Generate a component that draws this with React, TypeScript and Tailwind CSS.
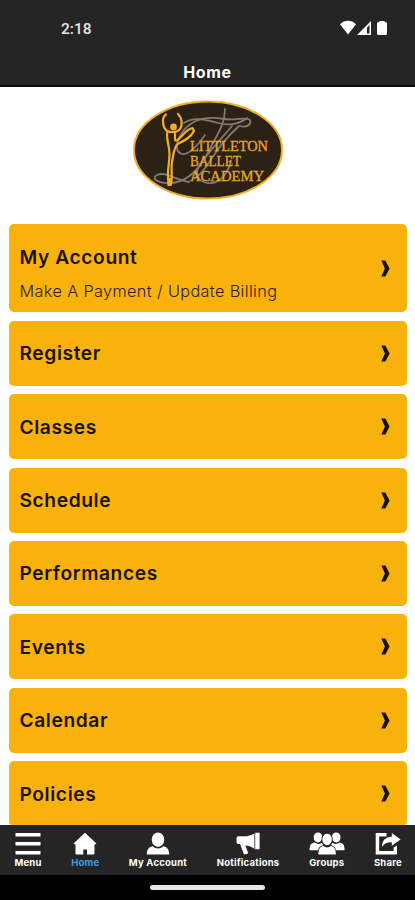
import React from 'react';

const menuItems = [
    { title: 'My Account', subtitle: 'Make A Payment / Update Billing' },
    { title: 'Register' },
    { title: 'Classes' },
    { title: 'Schedule' },
    { title: 'Performances' },
    { title: 'Events' },
    { title: 'Calendar' },
    { title: 'Policies' },
];

const Chevron = () => (
    <svg className="h-[17px] w-[9px] shrink-0" viewBox="0 0 9 17" fill="#171006">
        <path d="M0.3 0.5H4.3L8.6 8.5L4.3 16.5H0.3L3.9 8.5Z" />
    </svg>
);

const MenuCard: React.FC<{ title: string; subtitle?: string }> = ({ title, subtitle }) => (
    <div className={`flex shrink-0 items-center justify-between rounded-[5px] bg-[#f9b20b] pl-[10.5px] pr-[17px] text-[#1a1204] ${subtitle ? 'h-[88.4px]' : 'h-[65px]'}`}>
        <div className={subtitle ? 'pt-[9px]' : ''}>
            <h2 className="text-[19.2px] font-semibold leading-6 tracking-[0.6px]">{title}</h2>
            {subtitle && <p className="mt-[12px] text-[16.3px] font-light leading-5 tracking-[0.36px] text-[#2c1f04]">{subtitle}</p>}
        </div>
        <Chevron />
    </div>
);

const Logo = () => (
    <svg className="h-[102px] w-[152px]" viewBox="0 0 152 102" fill="none">
        <ellipse cx="76" cy="51" rx="74" ry="48.5" fill="#2b2115" stroke="#f0ad25" strokeWidth="2" />
        {/* monogram */}
        <g stroke="#807a72" strokeWidth="1.8" strokeLinecap="round">
            <path d="M108 27C113 29 120 26 118 21C114 17 104 22 92 20C76 17 61 20 52 31C44 41 42 53 50 55C57 56 66 46 73 36" />
            <path d="M52 24C62 17 74 21 86 24C96 27 108 25 115 19" />
            <path d="M93 10C93 26 84 37 78 50C70 66 57 83 39 84C28 85 18 80 25 76C34 72 43 81 57 83" />
            <path d="M107 27C96 37 87 48 80 59C73 70 67 78 61 80" />
            <path d="M100 27C90 39 75 55 67 67C61 78 70 85 80 84C91 82 97 71 99 62" />
        </g>
        <g fill="#e8a827" fontFamily="'Liberation Serif', serif" fontSize="14.6" stroke="#e8a827" strokeWidth="0.3">
            <text x="58" y="52" textLength="78" lengthAdjust="spacingAndGlyphs">LITTLETON</text>
            <text x="58" y="67" textLength="51" lengthAdjust="spacingAndGlyphs">BALLET</text>
            <text x="58" y="82" textLength="74" lengthAdjust="spacingAndGlyphs">ACADEMY</text>
        </g>
        {/* dancer */}
        <g stroke="#f2ad2b" strokeWidth="2.2" strokeLinecap="round" strokeLinejoin="round">
            <path d="M34 15.5C30 18 30.5 25 32.5 29C34 32 37.5 33.5 42 33C47.5 33 50.5 28 49.5 22C49.2 19 48 17 46 15" />
            <path d="M35.5 32C33.5 39 37.5 46 37.5 55C37.5 64 35.5 70 36 77L36.5 85" />
            <path d="M43 34C43.5 39 41.5 43 45.5 41C50.5 38 52.5 31 60.5 29L62 32C58.5 39 51.5 42 45.5 45C41.5 49 41.5 56 40 63C38.5 70 41 76 39 85" />
        </g>
        <circle cx="41.5" cy="28" r="3.4" fill="#f2ad2b" />
        <path d="M35.5 79H40L39.5 87H35.5Z" fill="#f2ad2b" />
    </svg>
);

const StatusIcons = () => (
    <svg className="h-4 w-12" viewBox="0 0 48 16" fill="white">
        <path d="M0 4.2C4.5-0.3 11.5-0.3 16 4.2L8 14.5Z" />
        <path fillRule="evenodd" d="M17 15L31 1V15ZM27 7.5V13.5H29.5V5Z" />
        <path d="M39.3 1H44.7V2H45.5Q47 2 47 3.5V13.5Q47 15 45.5 15H38.5Q37 15 37 13.5V3.5Q37 2 38.5 2H39.3Z" />
    </svg>
);

const navItems = [
    {
        label: 'Menu',
        width: 'w-7',
        icon: (
            <svg className="h-6 w-[26px]" viewBox="0 0 26 24" fill="white">
                <path d="M0.5 1H25.5V4.4H0.5ZM0.5 10H25.5V13.4H0.5ZM0.5 19H25.5V22.4H0.5Z" />
            </svg>
        ),
    },
    {
        label: 'Home',
        width: 'w-7',
        active: true,
        icon: (
            <svg className="h-6 w-6" viewBox="0 0 24 24" fill="white">
                <path d="M12 0.8L23.2 11.2Q23.5 12.2 22.5 12.2H21.5V21.5Q21.5 22.5 20.5 22.5H14V17.5H10.3V22.5H3.5Q2.5 22.5 2.5 21.5V12.2H1.5Q0.5 12.2 0.8 11.2Z" />
            </svg>
        ),
    },
    {
        label: 'My Account',
        width: 'w-[59px]',
        icon: (
            <svg className="h-6 w-6" viewBox="0 0 24 24" fill="white">
                <ellipse cx="12" cy="7.7" rx="6.2" ry="7.2" />
                <path d="M0.8 22.5C0.8 17 3.5 14.8 6.8 14.3C9.5 17.3 14.5 17.3 17.2 14.3C20.5 14.8 23.2 17 23.2 22.5Z" />
            </svg>
        ),
    },
    {
        label: 'Notifications',
        width: 'w-[63px]',
        icon: (
            <svg className="h-6 w-6" viewBox="0 0 24 24" fill="white">
                <path d="M18.4 1.4V16.7C15 14.5 12 13.7 9.4 13.3L12.3 21.4L8 22.4L4.1 12H2.2Q0.5 12 0.5 10.2V6Q0.5 4.3 2.2 4.3H8.5C12 4.1 15 3.3 18.4 1.4ZM19.2 0.8H23.6V17.2H19.2Z" />
            </svg>
        ),
    },
    {
        label: 'Groups',
        width: 'w-9',
        icon: (
            <svg className="h-6 w-9" viewBox="0 0 36 24" fill="white">
                <ellipse cx="9" cy="5.4" rx="4.3" ry="5" />
                <ellipse cx="27.2" cy="5.4" rx="4.3" ry="5" />
                <path d="M0.6 18.3C0.6 13 2.3 11 5.6 10.6C8 12.5 10.5 12.6 12.8 10.8L14.2 13.2C10.8 14.1 9.8 15.4 9.2 18.3ZM35.6 18.3C35.6 13 33.9 11 30.6 10.6C28.2 12.5 25.7 12.6 23.4 10.8L22 13.2C25.4 14.1 26.4 15.4 27 18.3Z" />
                <ellipse cx="18.1" cy="7.4" rx="5.2" ry="6.2" stroke="#252525" strokeWidth="0.9" />
                <path d="M9.4 22.5C9.4 16.7 11.4 14.6 14.3 14.1C16.7 16 19.5 16 21.9 14.1C24.9 14.6 26.9 16.7 26.9 22.5Z" />
            </svg>
        ),
    },
    {
        label: 'Share',
        width: 'w-7',
        icon: (
            <svg className="h-6 w-[26px]" viewBox="0 0 26 24" fill="white">
                <path d="M0.7 1H11.5V4.5H4.2V18.9H18.6V15.5L22 13.5V22.4H0.7Z" />
                <path d="M16.8 1L25.6 7.5L16.8 13.8V10.3C11.7 10.2 8.7 12 7 15.3C7.1 8.7 10.1 4.8 16.8 4.7Z" />
            </svg>
        ),
    },
];

const App: React.FC = () => (
    <div className="flex h-[900px] w-[415px] flex-col overflow-hidden bg-white font-['Inter',sans-serif]">
        <header className="h-[87px] shrink-0 border-b-2 border-[#0c0c0c] bg-[#252525] text-white">
            <div className="flex h-14 items-center justify-between pl-[61px] pr-[27px]">
                <span className="pt-px font-['Roboto',sans-serif] text-[15.5px] font-medium leading-5 text-[#e6e6e6]">2:18</span>
                <StatusIcons />
            </div>
            <h1 className="pt-[6px] text-center text-[16px] font-bold leading-5 tracking-[0.65px]">Home</h1>
        </header>

        <main className="flex min-h-0 flex-1 flex-col overflow-hidden pl-[9px] pr-2">
            <div className="flex h-[137px] shrink-0 justify-center pr-px pt-[12px]">
                <Logo />
            </div>
            <div className="flex flex-col gap-[8.4px]">
                {menuItems.map((item) => (
                    <MenuCard key={item.title} title={item.title} subtitle={item.subtitle} />
                ))}
            </div>
        </main>

        <nav className="flex h-[50px] shrink-0 gap-[29.2px] bg-[#252525] pl-[14px] pt-[7px]">
            {navItems.map((item) => (
                <div key={item.label} className={`flex shrink-0 flex-col items-center ${item.width}`}>
                    {item.icon}
                    <span className={`mt-[1px] whitespace-nowrap text-[9.5px] font-bold leading-3 tracking-[0.22px] ${item.active ? 'text-[#3b9be9]' : 'text-white'}`}>{item.label}</span>
                </div>
            ))}
        </nav>

        <div className="flex h-[25px] shrink-0 justify-center bg-black pt-[10px]">
            <div className="h-[5px] w-[115px] rounded-full bg-[#e4e4e4]" />
        </div>
    </div>
);

export default App;
